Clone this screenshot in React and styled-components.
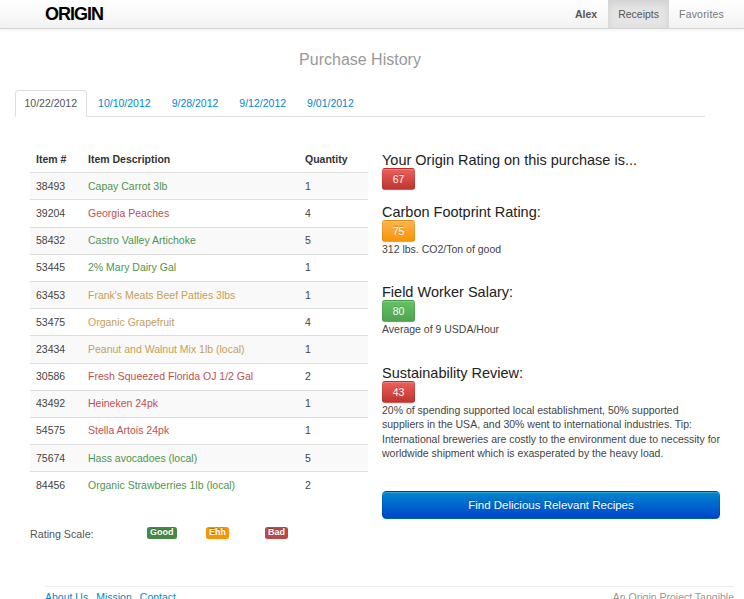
import React from "react";
import styled, { createGlobalStyle } from "styled-components";

const Global = createGlobalStyle`
  html, body { margin: 0; padding: 0; background: #fff; }
  body {
    font-family: "Liberation Sans", Arial, sans-serif;
    font-size: 10.5px;
    line-height: 15px;
    color: #333;
  }
  * { box-sizing: border-box; }
`;

const Navbar = styled.header`
  height: 29px;
  background: linear-gradient(#ffffff, #f2f2f2);
  border-bottom: 1px solid #d4d4d4;
  box-shadow: 0 1px 4px rgba(0, 0, 0, 0.065);
`;

const NavInner = styled.div`
  display: flex;
  align-items: center;
  justify-content: space-between;
  height: 28px;
  padding: 0 10px 0 45px;
`;

const Brand = styled.div`
  font-size: 18px;
  font-weight: bold;
  letter-spacing: -1px;
  color: #000;
  line-height: 28px;
`;

const NavList = styled.nav`
  display: flex;
  height: 28px;
`;

const NavItem = styled.a`
  display: block;
  padding: 0 10px;
  line-height: 28px;
  color: ${(p) => (p.$bold ? "#555" : p.$active ? "#555" : "#777")};
  font-weight: ${(p) => (p.$bold ? "bold" : "normal")};
  background: ${(p) => (p.$active ? "#e5e5e5" : "transparent")};
  box-shadow: ${(p) => (p.$active ? "inset 0 3px 8px rgba(0,0,0,0.1)" : "none")};
  margin-left: ${(p) => (p.$active ? "1px" : "0")};
  letter-spacing: ${(p) => (p.$spaced ? "0.2px" : "0")};
  text-decoration: none;
`;

const Page = styled.main`
  padding-left: 15px;
`;

const Title = styled.h1`
  width: 690px;
  margin: 0;
  padding-top: 21px;
  font-size: 16px;
  line-height: 20px;
  font-weight: normal;
  color: #999;
  text-align: center;
`;

const Tabs = styled.ul`
  display: flex;
  list-style: none;
  margin: 20px 0 0;
  padding: 0;
  width: 690px;
  border-bottom: 1px solid #ddd;
`;

const Tab = styled.li`
  margin: 0 2px -1px 0;
  padding: 5px 8.5px;
  line-height: 15px;
  border: 1px solid ${(p) => (p.$active ? "#ddd" : "transparent")};
  border-bottom-color: ${(p) => (p.$active ? "#fff" : "transparent")};
  border-radius: 4px 4px 0 0;
  background: ${(p) => (p.$active ? "#fff" : "transparent")};
  color: ${(p) => (p.$active ? "#555" : "#0088cc")};
`;

const Columns = styled.div`
  display: grid;
  grid-template-columns: 338px 338px;
  column-gap: 14px;
  margin: 29px 0 0 15px;
`;

const LeftCol = styled.section``;

const Table = styled.table`
  width: 338px;
  border-collapse: collapse;
  border-spacing: 0;
  table-layout: fixed;
`;

const Th = styled.th`
  text-align: left;
  font-weight: bold;
  color: #333;
  padding: 5.6px 6px;
  line-height: 15px;
  width: ${(p) => p.$w};
`;

const Tr = styled.tr`
  background: ${(p) => (p.$striped ? "#f9f9f9" : "#fff")};
`;

const Td = styled.td`
  padding: 5.6px 6px;
  line-height: 15px;
  border-top: 1px solid #ddd;
  color: ${(p) => p.$color || "#444"};
  white-space: nowrap;
`;

const RatingRow = styled.div`
  display: flex;
  align-items: center;
  height: 15px;
  margin-top: 29px;
`;

const RatingLabel = styled.span`
  width: 117px;
  font-size: 10.7px;
  color: #555;
`;

const ScaleCell = styled.span`
  width: 59px;
  display: flex;
  margin-bottom: 4px;
`;

const Label = styled.span`
  display: inline-block;
  padding: 1px 3px;
  font-size: 9px;
  line-height: 9.5px;
  font-weight: bold;
  color: #fff;
  border-radius: 2.5px;
  background: ${(p) => p.$bg};
  text-shadow: 0 -1px 0 rgba(0, 0, 0, 0.25);
`;

const RightCol = styled.section`
  padding-top: 6px;
`;

const Section = styled.div`
  margin-top: ${(p) => p.$gap || "0px"};
`;

const Heading = styled.h3`
  margin: 0;
  font-size: 14.5px;
  line-height: 16px;
  font-weight: normal;
  color: #222;
`;

const gradients = {
  red: "linear-gradient(#ee5f5b, #bd362f)",
  orange: "linear-gradient(#fbb450, #f89406)",
  green: "linear-gradient(#62c462, #51a351)",
};

const Score = styled.div`
  width: 33px;
  height: 21.5px;
  line-height: 21.5px;
  text-align: center;
  font-size: 10.5px;
  color: #fff;
  border-radius: 3px;
  background: ${(p) => gradients[p.$tone]};
  border: 1px solid rgba(0, 0, 0, 0.08);
  box-shadow: inset 0 1px 0 rgba(255, 255, 255, 0.2), 0 1px 2px rgba(0, 0, 0, 0.05);
  text-shadow: 0 -1px 0 rgba(0, 0, 0, 0.2);
`;

const Note = styled.p`
  margin: 0;
  line-height: ${(p) => (p.$dense ? "14.5px" : "15px")};
  color: #444;
  font-size: 10.5px;
`;

const RecipeButton = styled.button`
  display: block;
  width: 338px;
  height: 28px;
  margin-top: 30.5px;
  border: 1px solid #0044cc;
  border-color: rgba(0, 0, 0, 0.1) rgba(0, 0, 0, 0.1) rgba(0, 0, 0, 0.25);
  border-radius: 4.5px;
  background: linear-gradient(#0088cc, #0044cc);
  color: #fff;
  font-family: "Liberation Sans", Arial, sans-serif;
  font-size: 11.5px;
  text-shadow: 0 -1px 0 rgba(0, 0, 0, 0.25);
  box-shadow: inset 0 1px 0 rgba(255, 255, 255, 0.2), 0 1px 2px rgba(0, 0, 0, 0.05);
  cursor: pointer;
`;

const Footer = styled.footer`
  display: flex;
  justify-content: space-between;
  margin: 44px 10px 0 45px;
  padding-top: 3px;
  border-top: 1px solid #eee;
  line-height: 15px;
`;

const FooterLinks = styled.div`
  display: flex;
  gap: 8px;
`;

const FooterLink = styled.a`
  color: #0088cc;
  text-decoration: none;
`;

const Credit = styled.span`
  color: #999;
`;

const GREEN = "#4f944f";
const RED = "#c0504e";
const TAN = "#c59e5a";

const items = [
  ["38493", "Capay Carrot 3lb", 1, GREEN],
  ["39204", "Georgia Peaches", 4, RED],
  ["58432", "Castro Valley Artichoke", 5, GREEN],
  ["53445", "2% Mary Dairy Gal", 1, GREEN],
  ["63453", "Frank's Meats Beef Patties 3lbs", 1, TAN],
  ["53475", "Organic Grapefruit", 4, TAN],
  ["23434", "Peanut and Walnut Mix 1lb (local)", 1, TAN],
  ["30586", "Fresh Squeezed Florida OJ 1/2 Gal", 2, RED],
  ["43492", "Heineken 24pk", 1, RED],
  ["54575", "Stella Artois 24pk", 1, RED],
  ["75674", "Hass avocadoes (local)", 5, GREEN],
  ["84456", "Organic Strawberries 1lb (local)", 2, GREEN],
];

const dates = ["10/22/2012", "10/10/2012", "9/28/2012", "9/12/2012", "9/01/2012"];

export default function App() {
  return (
    <>
      <Global />
      <Navbar>
        <NavInner>
          <Brand>ORIGIN</Brand>
          <NavList>
            <NavItem $bold>Alex</NavItem>
            <NavItem $active>Receipts</NavItem>
            <NavItem $spaced>Favorites</NavItem>
          </NavList>
        </NavInner>
      </Navbar>
      <Page>
        <Title>Purchase History</Title>
        <Tabs>
          {dates.map((d, i) => (
            <Tab key={d} $active={i === 0}>
              {d}
            </Tab>
          ))}
        </Tabs>
        <Columns>
          <LeftCol>
            <Table>
              <thead>
                <tr>
                  <Th $w="52px">Item #</Th>
                  <Th $w="217px">Item Description</Th>
                  <Th $w="69px">Quantity</Th>
                </tr>
              </thead>
              <tbody>
                {items.map(([id, name, qty, color], i) => (
                  <Tr key={id} $striped={i % 2 === 0}>
                    <Td>{id}</Td>
                    <Td $color={color}>{name}</Td>
                    <Td>{qty}</Td>
                  </Tr>
                ))}
              </tbody>
            </Table>
            <RatingRow>
              <RatingLabel>Rating Scale:</RatingLabel>
              <ScaleCell>
                <Label $bg="#468847">Good</Label>
              </ScaleCell>
              <ScaleCell>
                <Label $bg="#f89406">Ehh</Label>
              </ScaleCell>
              <ScaleCell>
                <Label $bg="#b94a48">Bad</Label>
              </ScaleCell>
            </RatingRow>
          </LeftCol>
          <RightCol>
            <Section>
              <Heading>Your Origin Rating on this purchase is...</Heading>
              <Score $tone="red">67</Score>
            </Section>
            <Section $gap="14.5px">
              <Heading>Carbon Footprint Rating:</Heading>
              <Score $tone="orange">75</Score>
              <Note>312 lbs. CO2/Ton of good</Note>
            </Section>
            <Section $gap="27.5px">
              <Heading>Field Worker Salary:</Heading>
              <Score $tone="green">80</Score>
              <Note>Average of 9 USDA/Hour</Note>
            </Section>
            <Section $gap="28.5px">
              <Heading>Sustainability Review:</Heading>
              <Score $tone="red">43</Score>
              <Note $dense>
                20% of spending supported local establishment, 50% supported suppliers in the USA, and 30% went to
                international industries. Tip: International breweries are costly to the environment due to
                necessity for worldwide shipment which is exasperated by the heavy load.
              </Note>
            </Section>
            <RecipeButton>Find Delicious Relevant Recipes</RecipeButton>
          </RightCol>
        </Columns>
      </Page>
      <Footer>
        <FooterLinks>
          <FooterLink>About Us</FooterLink>
          <FooterLink>Mission</FooterLink>
          <FooterLink>Contact</FooterLink>
        </FooterLinks>
        <Credit>An Origin Project Tangible</Credit>
      </Footer>
    </>
  );
}
